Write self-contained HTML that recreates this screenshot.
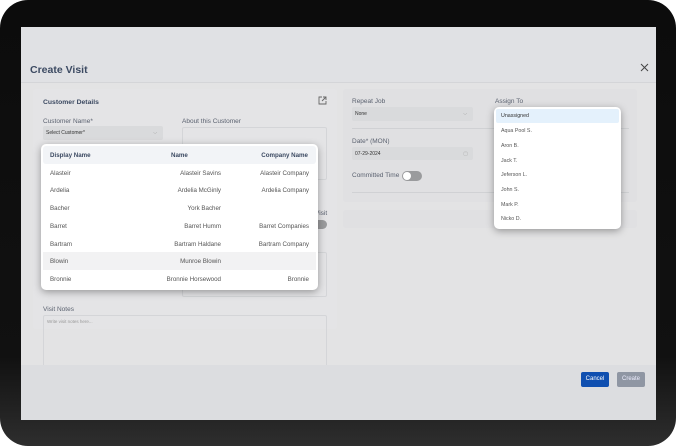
<!DOCTYPE html>
<html><head><style>
*{box-sizing:border-box;margin:0;padding:0}
body{width:676px;height:446px;background:#fff;font-family:"Liberation Sans",sans-serif;position:relative;overflow:hidden}
.dev{position:absolute;left:0;top:0;width:676px;height:446px;background:linear-gradient(#0c0c0c 0%,#111 80%,#2e2e2e 100%);border-radius:28px}
.scr{position:absolute;left:21px;top:27px;width:635px;height:393px;background:#e3e3e4;overflow:hidden}
.a{position:absolute}
.lbl{font-size:6.5px;color:#5b6270}
.inp{background:#d9dadc;border-radius:2px;font-size:5px;color:#333;padding:4px 3px}
.dd{background:#fff;border-radius:5px;box-shadow:0 2px 8px rgba(0,0,0,.35)}
.row{position:absolute;left:0;width:100%;height:17.7px;font-size:6.2px;color:#555;}
.row span{position:absolute;top:6px}
</style></head><body>
<div class="dev"></div>
<div class="scr">
 <div class="a" style="left:0;top:0;width:635px;height:56px;background:#e0e1e4;border-bottom:1px solid #d4d5d8"></div>
 <div class="a" style="left:9px;top:37px;font-size:10.5px;color:#3c4a62;font-weight:bold">Create Visit</div>
 <svg class="a" style="left:619px;top:36px" width="9" height="9" viewBox="0 0 9 9"><path d="M1 1L8 8M8 1L1 8" stroke="#444" stroke-width="1"/></svg>
 <div class="a" style="left:12px;top:62px;width:304px;height:240px;background:#e4e4e6;border-radius:3px"></div>
 <div class="a" style="left:22px;top:72px;font-size:6.8px;font-weight:bold;color:#3c4a62">Customer Details</div>
 <svg class="a" style="left:297px;top:69px" width="9" height="9" viewBox="0 0 9 9"><path d="M4 1H1v7h7V5M5 1h3v3M8 1L4 5" fill="none" stroke="#666" stroke-width="0.9"/></svg>
 <div class="a lbl" style="left:22px;top:91px">Customer Name*</div>
 <div class="a inp" style="left:22px;top:99px;width:120px;height:14px">Select Customer*<span style="position:absolute;right:6px;color:#999">⌵</span></div>
 <div class="a lbl" style="left:161px;top:91px">About this Customer</div>
 <div class="a" style="left:161px;top:100px;width:145px;height:53px;border:1px solid #d4d5d8;border-radius:2px"></div>
 <div class="a lbl" style="left:294px;top:183px">Visit</div>
 <div class="a" style="left:288px;top:193px;width:18px;height:9px;background:#9a9b9d;border-radius:5px"></div>
 <div class="a" style="left:161px;top:225px;width:145px;height:45px;border:1px solid #d4d5d8;border-radius:2px"></div>
 <div class="a lbl" style="left:22px;top:279px">Visit Notes</div>
 <div class="a" style="left:22px;top:288px;width:284px;height:55px;border:1px solid #d4d5d8;border-radius:2px;font-size:4.5px;color:#999;padding:3px">Write visit notes here...</div>
 <div class="a" style="left:322px;top:62px;width:294px;height:113px;background:#e0e0e2;border-radius:3px"></div>
 <div class="a lbl" style="left:331px;top:71px">Repeat Job</div>
 <div class="a inp" style="left:331px;top:80px;width:121px;height:14px">None<span style="position:absolute;right:6px;color:#999">⌵</span></div>
 <div class="a" style="left:331px;top:101px;width:277px;height:1px;background:#d0d1d4"></div>
 <div class="a lbl" style="left:331px;top:111px">Date* (MON)</div>
 <div class="a inp" style="left:331px;top:120px;width:121px;height:13px">07-29-2024<span style="position:absolute;right:5px;color:#aaa">▢</span></div>
 <div class="a lbl" style="left:331px;top:145px">Committed Time</div>
 <div class="a" style="left:381px;top:144px;width:20px;height:10px;background:#9a9b9d;border-radius:5px"><div style="position:absolute;left:1px;top:1px;width:8px;height:8px;background:#fff;border-radius:50%"></div></div>
 <div class="a" style="left:331px;top:165px;width:277px;height:1px;background:#d0d1d4"></div>
 <div class="a lbl" style="left:474px;top:71px">Assign To</div>
 <div class="a" style="left:322px;top:183px;width:294px;height:18px;background:#e0e0e2;border-radius:3px"></div>
 <div class="a" style="left:0;top:338px;width:635px;height:55px;background:#dcdde0"></div>
 <div class="a" style="left:560px;top:345px;width:28px;height:15px;background:#0f4fb0;border-radius:2px;color:#fff;font-size:6px;text-align:center;line-height:15px">Cancel</div>
 <div class="a" style="left:596px;top:345px;width:28px;height:15px;background:#8f96a3;border-radius:2px;color:#eef;font-size:6px;text-align:center;line-height:15px">Create</div>
 <div class="a dd" style="left:20px;top:117px;width:277px;height:146px">
  <div class="row" style="top:2px;left:2px;width:273px;background:#f2f4f7;font-weight:bold;color:#3c4a62;border-radius:3px"><span style="left:7px">Display Name</span><span style="left:128px">Name</span><span style="right:8px">Company Name</span></div>
  <div class="row" style="top:19.7px"><span style="left:9px">Alasteir</span><span style="right:97px">Alasteir Savins</span><span style="right:9px">Alasteir Company</span></div>
  <div class="row" style="top:37.4px"><span style="left:9px">Ardelia</span><span style="right:97px">Ardelia McGinly</span><span style="right:9px">Ardelia Company</span></div>
  <div class="row" style="top:55.1px"><span style="left:9px">Bacher</span><span style="right:97px">York Bacher</span></div>
  <div class="row" style="top:72.8px"><span style="left:9px">Barret</span><span style="right:97px">Barret Humm</span><span style="right:9px">Barret Companies</span></div>
  <div class="row" style="top:90.5px"><span style="left:9px">Bartram</span><span style="right:97px">Bartram Haldane</span><span style="right:9px">Bartram Company</span></div>
  <div class="row" style="top:108.2px;left:2px;width:273px;background:#f2f2f3"><span style="left:7px">Blowin</span><span style="right:95px">Munroe Blowin</span></div>
  <div class="row" style="top:125.9px"><span style="left:9px">Bronnie</span><span style="right:97px">Bronnie Horsewood</span><span style="right:9px">Bronnie</span></div>
 </div>
 <div class="a dd" style="left:473px;top:80px;width:127px;height:122px;font-size:5.3px;color:#555">
  <div class="a" style="left:2px;top:2px;width:123px;height:14px;background:#e4f1fc;border-radius:2px"></div>
  <div class="a" style="left:7px;top:6px;color:#333">Unassigned</div>
  <div class="a" style="left:7px;top:21px">Aqua Pool S.</div>
  <div class="a" style="left:7px;top:36px">Aron B.</div>
  <div class="a" style="left:7px;top:51px">Jack T.</div>
  <div class="a" style="left:7px;top:65px">Jeferson L.</div>
  <div class="a" style="left:7px;top:80px">John S.</div>
  <div class="a" style="left:7px;top:95px">Mark P.</div>
  <div class="a" style="left:7px;top:109px">Nicko D.</div>
 </div>
</div>
</body></html>
